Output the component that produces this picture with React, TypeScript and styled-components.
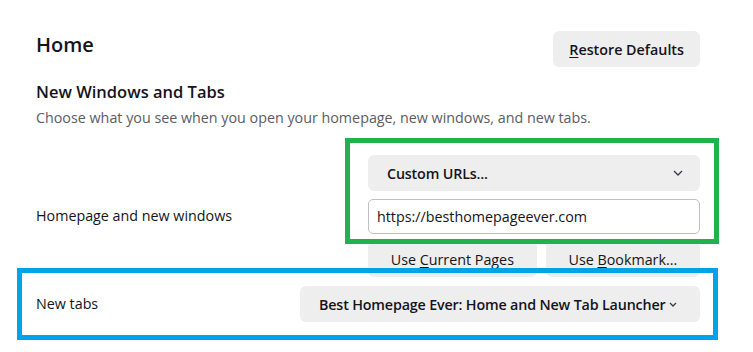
import React from 'react';
import styled, { createGlobalStyle } from 'styled-components';

const GlobalStyle = createGlobalStyle`
  html, body {
    margin: 0;
    padding: 0;
    background: #ffffff;
  }
  body {
    font-family: "Open Sans", "Noto Sans", sans-serif;
    color: #15141a;
    font-size: 14.3px;
  }
`;

const Page = styled.div`
  position: relative;
  width: 753px;
  height: 352px;
  box-sizing: border-box;
  padding: 31px 53px 0 36px;
  overflow: hidden;
`;

const Header = styled.div`
  display: flex;
  align-items: flex-start;
  justify-content: space-between;
  height: 36px;
`;

const Title = styled.h1`
  margin: 1px 0 0;
  font-size: 20px;
  font-weight: 600;
  line-height: 26px;
`;

const Button = styled.button<{ $grow?: boolean }>`
  height: 36px;
  border: none;
  border-radius: 6px;
  background: #eeeeef;
  color: #15141a;
  font-family: inherit;
  font-size: 14.3px;
  font-weight: 600;
  padding: 0 16px;
  ${p => (p.$grow ? 'flex: 1 1 auto; font-weight: 500;' : '')}
  u { text-decoration-thickness: 1px; text-underline-offset: 2px; }
`;

const SectionTitle = styled.h2`
  margin: 13px 0 0;
  font-size: 16.5px;
  font-weight: 600;
  line-height: 24px;
`;

const Description = styled.p`
  margin: 3px 0 0;
  color: #5b5b66;
  line-height: 22px;
`;

const Row = styled.div<{ $top: number }>`
  display: flex;
  align-items: center;
  justify-content: space-between;
  margin-top: ${p => p.$top}px;
`;

const Label = styled.span`
  line-height: 20px;
`;

const Controls = styled.div`
  width: 332px;
  display: flex;
  flex-direction: column;
  gap: 8px;
`;

const ButtonRow = styled.div`
  display: flex;
  gap: 9px;
  margin-top: -1px;
`;

const Select = styled.div<{ $width: number; $pad: number }>`
  width: ${p => p.$width}px;
  height: 36px;
  box-sizing: border-box;
  border-radius: 6px;
  background: #eeeeef;
  display: flex;
  align-items: center;
  justify-content: space-between;
  gap: 3px;
  padding: 0 ${p => p.$pad}px 0 19px;
  font-weight: 600;
  letter-spacing: -0.16px;
  white-space: nowrap;
`;

const Input = styled.div`
  height: 35px;
  box-sizing: border-box;
  border: 1px solid #bfbfc9;
  border-radius: 5px;
  display: flex;
  align-items: center;
  padding: 0 8px;
`;

const Frame = styled.div<{ $color: string; $x: number; $y: number; $w: number; $h: number }>`
  position: absolute;
  left: ${p => p.$x}px;
  top: ${p => p.$y}px;
  width: ${p => p.$w}px;
  height: ${p => p.$h}px;
  box-sizing: border-box;
  border: 5px solid ${p => p.$color};
  pointer-events: none;
`;

const ChevronSvg = styled.svg`
  flex-shrink: 0;
  display: block;
`;

const Chevron = ({ w, h }: { w: number; h: number }) => (
  <ChevronSvg width={w + 2} height={h + 2} viewBox={`0 0 ${w + 2} ${h + 2}`} fill="none">
    <path d={`M1 1l${w / 2} ${h}L${w + 1} 1`} stroke="#3a3944" strokeWidth="1.3" />
  </ChevronSvg>
);

export default function App() {
  return (
    <>
      <GlobalStyle />
      <Page>
        <Header>
          <Title>Home</Title>
          <Button><u>R</u>estore Defaults</Button>
        </Header>
        <SectionTitle>New Windows and Tabs</SectionTitle>
        <Description>Choose what you see when you open your homepage, new windows, and new tabs.</Description>

        <Row $top={26}>
          <Label>Homepage and new windows</Label>
          <Controls>
            <Select $width={332} $pad={17}>
              <span>Custom URLs...</span>
              <Chevron w={8} h={4} />
            </Select>
            <Input>https://besthomepageever.com</Input>
            <ButtonRow>
              <Button $grow>Use <u>C</u>urrent Pages</Button>
              <Button $grow>Use <u>B</u>ookmark...</Button>
            </ButtonRow>
          </Controls>
        </Row>

        <Row $top={9}>
          <Label>New tabs</Label>
          <Select $width={400} $pad={25}>
            <span>Best Homepage Ever: Home and New Tab Launcher</span>
            <Chevron w={6} h={3} />
          </Select>
        </Row>

        <Frame $color="#22b14c" $x={345} $y={138} $w={374} $h={106} />
        <Frame $color="#00a2e8" $x={17} $y={268} $w={701} $h={72} />
      </Page>
    </>
  );
}
